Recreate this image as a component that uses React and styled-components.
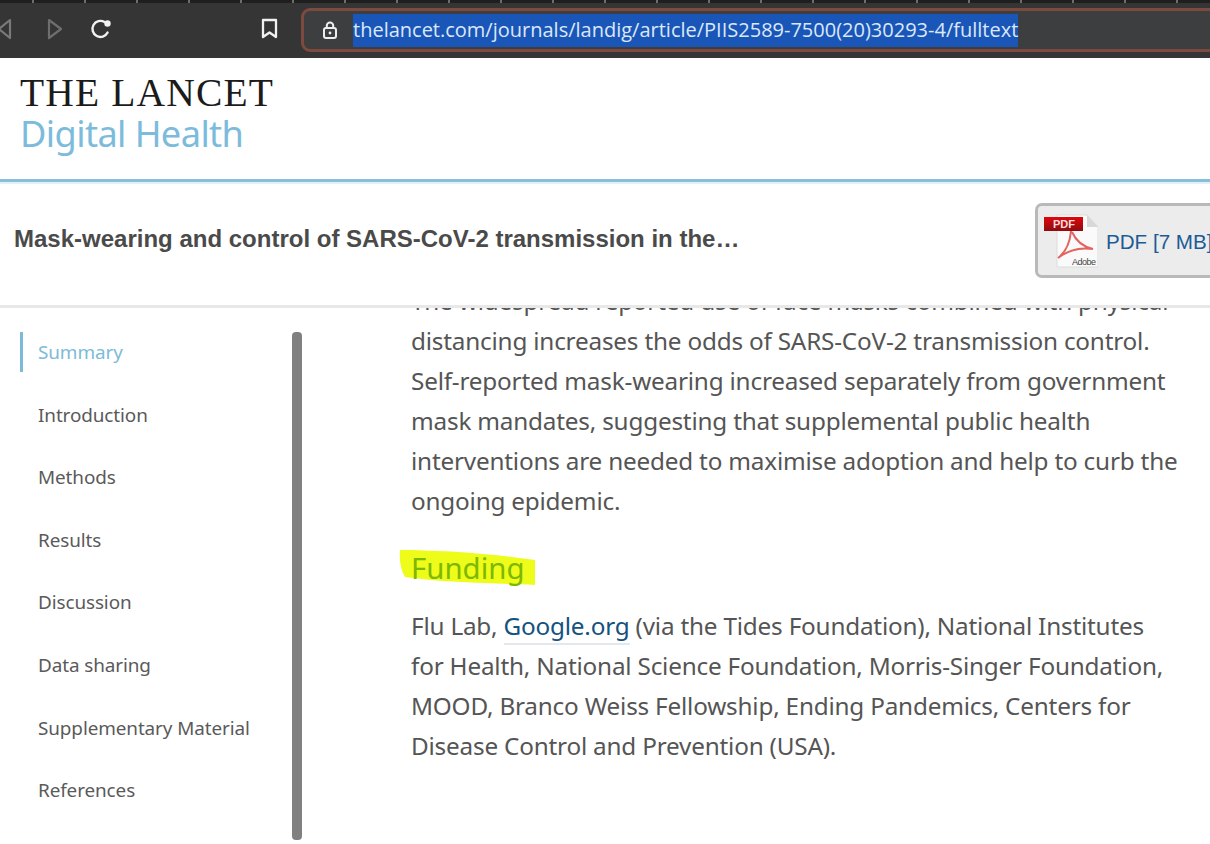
import React from 'react';
import styled, { createGlobalStyle } from 'styled-components';

const Global = createGlobalStyle`
  html, body { margin: 0; padding: 0; background: #fff; overflow: hidden; }
  * { box-sizing: border-box; }
`;

const Page = styled.div`
  width: 1210px;
  height: 844px;
  display: flex;
  flex-direction: column;
  overflow: hidden;
  font-family: "Noto Sans", "Open Sans", sans-serif;
`;

const Chrome = styled.div`
  height: 58px;
  flex: none;
  background: #353535;
  display: flex;
  align-items: flex-start;
  position: relative;
  padding: 8px 0 0 0;
`;

const Ticks = styled.div`
  position: absolute;
  top: 0;
  left: 0;
  right: 0;
  height: 3px;
  background: repeating-linear-gradient(90deg, #1f1f1f 0 50px, #6e6e6e 50px 52px);
  background-position: -18px 0;
`;

const NavIcons = styled.div`
  width: 301px;
  height: 43px;
  flex: none;
  display: flex;
  align-items: center;
  position: relative;
  top: -1px;
`;

const IconSlot = styled.span`
  display: flex;
  width: ${(p) => p.$w}px;
  margin-left: ${(p) => p.$ml}px;
  flex: none;
`;

const Address = styled.div`
  flex: 1;
  height: 44px;
  margin-right: -12px;
  background: #3c3e40;
  border: 3px solid #7c4a3e;
  border-radius: 9px;
  display: flex;
  align-items: center;
  padding-left: 18px;
`;

const Url = styled.span`
  margin-left: 15px;
  background: #1a56b8;
  color: #dbe8f8;
  font-family: "Open Sans", sans-serif;
  font-size: 20px;
  line-height: 32px;
  height: 33px;
  white-space: nowrap;
`;

const Masthead = styled.header`
  height: 121px;
  flex: none;
  background: #fff;
  padding: 15px 0 0 20px;
`;

const LancetTitle = styled.div`
  font-family: "Liberation Serif", serif;
  font-size: 39.5px;
  line-height: 40px;
  color: #1b1b1b;
  letter-spacing: 1.15px;
  white-space: nowrap;
`;

const JournalName = styled.div`
  font-family: "Noto Sans", sans-serif;
  font-size: 36.2px;
  line-height: 38px;
  margin-top: 1px;
  color: #7cbbdc;
  letter-spacing: -0.6px;
  white-space: nowrap;
`;

const BlueRule = styled.div`
  height: 5px;
  flex: none;
  border-top: 3px solid #85bfdc;
  background: #e2f0f7;
`;

const ArticleBar = styled.div`
  height: 124px;
  flex: none;
  display: flex;
  align-items: flex-start;
  justify-content: space-between;
  border-bottom: 3px solid #e8e8e8;
  padding: 19px 0 0 14px;
`;

const ArticleTitle = styled.div`
  font-family: "Liberation Sans", Arial, sans-serif;
  font-weight: 700;
  font-size: 24px;
  line-height: 28px;
  margin-top: 22px;
  color: #4a4a4a;
  white-space: nowrap;
`;

const PdfButton = styled.div`
  width: 190px;
  height: 75px;
  flex: none;
  margin-right: -15px;
  background: #ececec;
  border: 3px solid #b9b9b9;
  border-radius: 7px;
  display: flex;
  align-items: center;
  padding-left: 6px;
  color: #1c5c96;
  font-family: "Liberation Sans", Arial, sans-serif;
  font-size: 20.6px;
  white-space: nowrap;
`;

const PdfLabel = styled.span`
  margin-left: 8px;
  margin-top: 2px;
`;

const Body = styled.div`
  flex: 1;
  min-height: 0;
  display: flex;
`;

const Sidebar = styled.nav`
  width: 292px;
  flex: none;
  padding: 24px 0 0 20px;
`;

const NavItem = styled.div`
  height: 40px;
  margin-bottom: 22.6px;
  display: flex;
  align-items: center;
  padding-left: ${(p) => (p.$active ? 15 : 18)}px;
  border-left: ${(p) => (p.$active ? '3px solid #7cbbd8' : 'none')};
  color: ${(p) => (p.$active ? '#7cbbd8' : '#5a5a5a')};
  font-size: 18.9px;
  letter-spacing: -0.1px;
  white-space: nowrap;
`;

const Thumb = styled.div`
  width: 10px;
  height: 508px;
  flex: none;
  margin-top: 24px;
  background: #808080;
  border-radius: 4px;
`;

const Article = styled.main`
  flex: 1;
  min-width: 0;
  padding-left: 109px;
  overflow: hidden;
`;

const Para = styled.p`
  margin: ${(p) => p.$mt || 0}px 0 0;
  font-size: 24.3px;
  letter-spacing: -0.2px;
  line-height: 40px;
  color: #555;
  white-space: nowrap;
`;

const HeadingWrap = styled.div`
  position: relative;
  height: 40px;
  margin-top: 27px;
  display: flex;
  align-items: center;
`;

const Marker = styled.svg`
  position: absolute;
  left: -14px;
  top: -3px;
`;

const Heading = styled.h2`
  position: relative;
  margin: 0;
  font-weight: 400;
  font-size: 29.4px;
  line-height: 40px;
  color: #7db800;
`;

const TextLink = styled.span`
  color: #14527f;
  padding-bottom: 1px;
  border-bottom: 2px solid #e4e8ec;
`;

const Back = () => (
  <svg width="16" height="22" viewBox="0 0 16 22" fill="none" stroke="#7a7a7a" strokeWidth="2.2">
    <path d="M13 2 L2 11 L13 20 Z" strokeLinejoin="round" />
  </svg>
);

const Forward = () => (
  <svg width="16" height="22" viewBox="0 0 16 22" fill="none" stroke="#6e6e6e" strokeWidth="2.2">
    <path d="M2 2 L14 11 L2 20 Z" strokeLinejoin="round" />
  </svg>
);

const Reload = () => (
  <svg width="22" height="22" viewBox="0 0 22 22" fill="none">
    <path d="M17.6 14.5 A8 8 0 1 1 14.5 4" stroke="#f2f2f2" strokeWidth="2.4" strokeLinecap="round" />
    <circle cx="17.5" cy="5.5" r="3.2" fill="#f2f2f2" />
  </svg>
);

const Bookmark = () => (
  <svg width="17" height="21" viewBox="0 0 17 21" fill="none" stroke="#f2f2f2" strokeWidth="2.3" strokeLinejoin="round">
    <path d="M2 2 H15 V19 L8.5 14.5 L2 19 Z" />
  </svg>
);

const Lock = () => (
  <svg width="16" height="18" viewBox="0 0 16 18" fill="none" stroke="#eeeeee" strokeWidth="2">
    <rect x="2" y="7" width="12" height="10" rx="2" />
    <path d="M4.8 7 V4.6 A3.2 3.2 0 0 1 11.2 4.6 V7" />
    <circle cx="8" cy="12" r="1.4" fill="#eeeeee" stroke="none" />
  </svg>
);

const PdfIcon = () => (
  <svg width="54" height="54" viewBox="0 0 54 54" style={{ flex: 'none' }}>
    <defs>
      <linearGradient id="pdfRed" x1="0" y1="0" x2="0" y2="1">
        <stop offset="0" stopColor="#e0060c" />
        <stop offset="1" stopColor="#8e0c10" />
      </linearGradient>
    </defs>
    <path d="M13 1 H43 L54 13 V53 H13 Z" fill="#fafafa" stroke="#dcdcdc" />
    <path d="M43 1 L43 13 H54 Z" fill="#d8d8d8" />
    <rect x="0" y="3" width="39" height="14" fill="url(#pdfRed)" />
    <text x="9" y="14" fontFamily="Liberation Sans, sans-serif" fontWeight="700" fontSize="11" fill="#f6dede">PDF</text>
    <path d="M27 17 C26 28 22 38 14 44 C24 36 36 33 49 35 C40 33 32 27 28 18" fill="none" stroke="#e2655f" strokeWidth="2" />
    <text x="28" y="51" fontFamily="Liberation Sans, sans-serif" fontSize="9" letterSpacing="-0.5" fill="#444">Adobe</text>
  </svg>
);

const navItems = ['Summary', 'Introduction', 'Methods', 'Results', 'Discussion', 'Data sharing', 'Supplementary Material', 'References'];

export default function App() {
  return (
    <Page>
      <Global />
      <Chrome>
        <Ticks />
        <NavIcons>
          <IconSlot $w={16} $ml={-3}><Back /></IconSlot>
          <IconSlot $w={16} $ml={34}><Forward /></IconSlot>
          <IconSlot $w={22} $ml={27}><Reload /></IconSlot>
          <IconSlot $w={17} $ml={149}><Bookmark /></IconSlot>
        </NavIcons>
        <Address>
          <Lock />
          <Url>thelancet.com/journals/landig/article/PIIS2589-7500(20)30293-4/fulltext</Url>
        </Address>
      </Chrome>
      <Masthead>
        <LancetTitle>THE LANCET</LancetTitle>
        <JournalName>Digital Health</JournalName>
      </Masthead>
      <BlueRule />
      <ArticleBar>
        <ArticleTitle>Mask-wearing and control of SARS-CoV-2 transmission in the…</ArticleTitle>
        <PdfButton>
          <PdfIcon />
          <PdfLabel>PDF [7 MB]</PdfLabel>
        </PdfButton>
      </ArticleBar>
      <Body>
        <Sidebar>
          {navItems.map((item, i) => (
            <NavItem key={item} $active={i === 0}>{item}</NavItem>
          ))}
        </Sidebar>
        <Thumb />
        <Article>
          <Para $mt={-27}>
            The widespread reported use of face masks combined with physical<br />
            distancing increases the odds of SARS-CoV-2 transmission control.<br />
            Self-reported mask-wearing increased separately from government<br />
            mask mandates, suggesting that supplemental public health<br />
            interventions are needed to maximise adoption and help to curb the<br />
            ongoing epidemic.
          </Para>
          <HeadingWrap>
            <Marker width="140" height="46" viewBox="0 0 140 46">
              <path d="M3 5 C40 5 90 8 138 15 L138 40 C100 38 50 38 8 32 C4 26 2 14 3 5 Z" fill="#eefc1a" />
            </Marker>
            <Heading>Funding</Heading>
          </HeadingWrap>
          <Para $mt={18}>
            Flu Lab, <TextLink>Google.org</TextLink> (via the Tides Foundation), National Institutes<br />
            for Health, National Science Foundation, Morris-Singer Foundation,<br />
            MOOD, Branco Weiss Fellowship, Ending Pandemics, Centers for<br />
            Disease Control and Prevention (USA).
          </Para>
        </Article>
      </Body>
    </Page>
  );
}
